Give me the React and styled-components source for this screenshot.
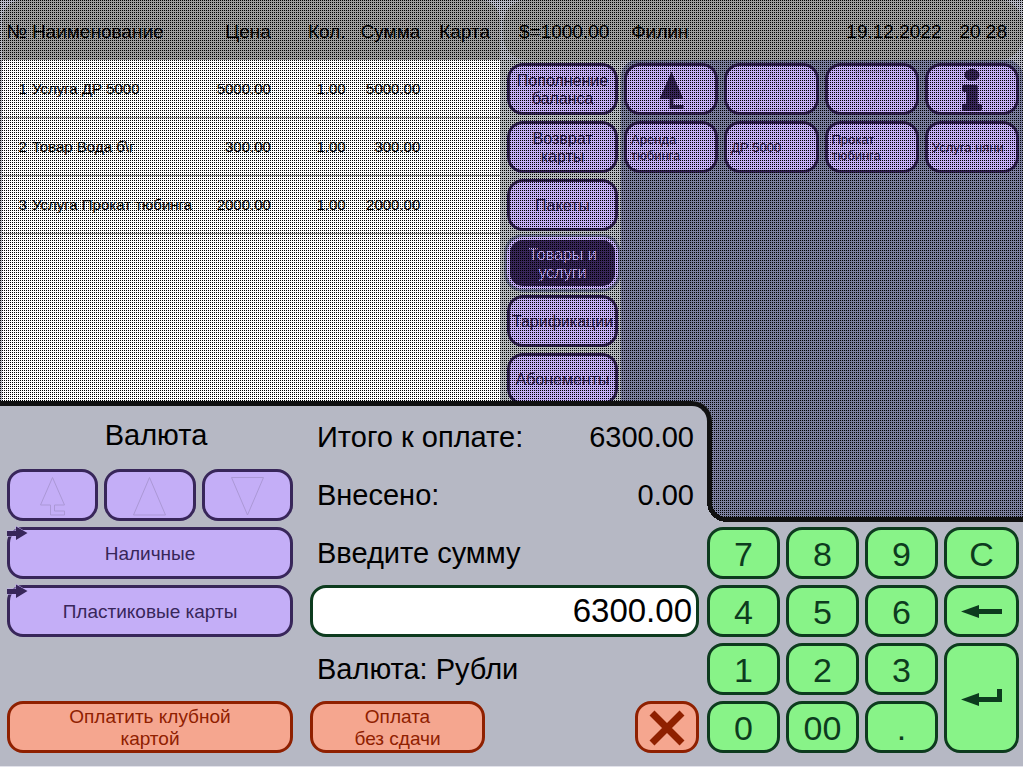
import React, { useState } from "react";
import styled, { createGlobalStyle, css } from "styled-components";
import { FaInfo } from "react-icons/fa";

const items = [
  { id: 1, name: "Услуга ДР 5000", price: "5000.00", qty: "1.00", sum: "5000.00" },
  { id: 2, name: "Товар Вода б\\г", price: "300.00", qty: "1.00", sum: "300.00" },
  { id: 3, name: "Услуга Прокат тюбинга", price: "2000.00", qty: "1.00", sum: "2000.00" },
];

const tabs = [
  "Пополнение баланса",
  "Возврат карты",
  "Пакеты",
  "Товары и услуги",
  "Тарификации",
  "Абонементы",
];

const goods = ["Аренда тюбинга", "ДР 5000", "Прокат тюбинга", "Услуга няни"];

const keys = ["7", "8", "9", "C", "4", "5", "6", "back", "1", "2", "3", "enter", "0", "00", "."];

function TurnIcon({ outline }) {
  return (
    <Shape width="27" height="40" viewBox="-1 -1 27 40" $outline={outline}>
      <path d="M12.5 0.5 L24.5 28 H14.5 V34 H24.5 V38 H10.5 V28 H0.5 Z" />
    </Shape>
  );
}

function TriangleIcon({ down }) {
  return (
    <Shape width="35" height="40" viewBox="-1 -1 35 40" $outline>
      <path d={down ? "M0.5 0.5 H32.5 L16.5 38 Z" : "M16.5 0.5 L32.5 38 H0.5 Z"} />
    </Shape>
  );
}

function BackIcon() {
  return (
    <Shape width="41" height="14" viewBox="0 0 41 14">
      <path d="M0 6.5 L18 0 V4 H41 V9 H18 V13 Z" />
    </Shape>
  );
}

function EnterIcon() {
  return (
    <Shape width="41" height="28" viewBox="0 4 41 28">
      <path d="M0 18.5 L18 12 V16 H36 V8 H41 V21 H18 V25 Z" />
    </Shape>
  );
}

function Key({ value, onPress }) {
  if (value === "back") {
    return (
      <KeyButton aria-label="Стереть" onClick={() => onPress(value)}>
        <BackIcon />
      </KeyButton>
    );
  }
  if (value === "enter") {
    return (
      <KeyButton $tall aria-label="Ввод" onClick={() => onPress(value)}>
        <EnterIcon />
      </KeyButton>
    );
  }
  return <KeyButton onClick={() => onPress(value)}>{value}</KeyButton>;
}

function Sale() {
  return (
    <SaleTable>
      <colgroup>
        <col style={{ width: "6%" }} />
        <col style={{ width: "33%" }} />
        <col style={{ width: "15%" }} />
        <col style={{ width: "15%" }} />
        <col style={{ width: "15%" }} />
        <col style={{ width: "16%" }} />
      </colgroup>
      <thead>
        <tr>
          <th>№</th>
          <th>Наименование</th>
          <th>Цена</th>
          <th>Кол.</th>
          <th>Сумма</th>
          <th>Карта</th>
        </tr>
      </thead>
      <tbody>
        {items.map((item) => (
          <tr key={item.id}>
            <td>{item.id}</td>
            <td>{item.name}</td>
            <td>{item.price}</td>
            <td>{item.qty}</td>
            <td>{item.sum}</td>
            <td />
          </tr>
        ))}
      </tbody>
    </SaleTable>
  );
}

function App() {
  const [amount, setAmount] = useState("6300.00");

  const press = (value) => {
    if (value === "C") setAmount("");
    else if (value === "back") setAmount((prev) => prev.slice(0, -1));
    else if (value !== "enter") setAmount((prev) => prev + value);
  };

  return (
    <Screen>
      <GlobalStyle />
      <SalePane>
        <Sale />
      </SalePane>
      <ShopPane>
        <StatusBar>
          <span>$=1000.00</span>
          <span>Филин</span>
          <Clock>
            <span>19.12.2022</span>
            <span>20 28</span>
          </Clock>
        </StatusBar>
        <ShopBody>
          <Tabs>
            {tabs.map((tab) => (
              <TabButton key={tab} $active={tab === "Товары и услуги"}>
                {tab}
              </TabButton>
            ))}
          </Tabs>
          <Goods>
            <GoodsGrid>
              <PurpleButton aria-label="Назад">
                <TurnIcon />
              </PurpleButton>
              <PurpleButton aria-label="Вверх" disabled>
                <TriangleIcon />
              </PurpleButton>
              <PurpleButton aria-label="Вниз" disabled>
                <TriangleIcon down />
              </PurpleButton>
              <PurpleButton aria-label="Информация">
                <InfoIcon preserveAspectRatio="none" />
              </PurpleButton>
              {goods.map((name) => (
                <GoodsButton key={name}>{name}</GoodsButton>
              ))}
            </GoodsGrid>
          </Goods>
        </ShopBody>
      </ShopPane>

      <Backdrop />

      <Dialog role="dialog" aria-label="Оплата">
        <Payment>
          <Currency>
            <Title>Валюта</Title>
            <Arrows>
              <PurpleButton aria-label="Назад" disabled>
                <TurnIcon outline />
              </PurpleButton>
              <PurpleButton aria-label="Вверх" disabled>
                <TriangleIcon />
              </PurpleButton>
              <PurpleButton aria-label="Вниз" disabled>
                <TriangleIcon down />
              </PurpleButton>
            </Arrows>
            {["Наличные", "Пластиковые карты"].map((name) => (
              <PurpleButton key={name}>
                <Marker width="21" height="15" viewBox="0 0 21 15">
                  <path d="M0 5 H9 V0.5 L20.5 7 L9 14 V10 H0 Z" />
                </Marker>
                {name}
              </PurpleButton>
            ))}
            <ClubButton>
              Оплатить клубной
              <br />
              картой
            </ClubButton>
          </Currency>

          <Totals>
            <Line>
              <span>Итого к оплате:</span>
              <span>6300.00</span>
            </Line>
            <Line>
              <span>Внесено:</span>
              <span>0.00</span>
            </Line>
            <Line>
              <label htmlFor="amount">Введите сумму</label>
            </Line>
            <AmountInput
              id="amount"
              type="text"
              value={amount}
              onChange={(e) => setAmount(e.target.value)}
            />
            <Line>Валюта: Рубли</Line>
            <Actions>
              <ExactButton>
                Оплата
                <br />
                без сдачи
              </ExactButton>
              <CloseButton aria-label="Закрыть">
                <svg width="36" height="36" viewBox="0 0 36 36">
                  <path d="M3 3 L33 33 M33 3 L3 33" stroke="currentColor" strokeWidth="7" />
                </svg>
              </CloseButton>
            </Actions>
          </Totals>
        </Payment>

        <KeypadSide>
          <Notch />
          <Keypad>
            {keys.map((value) => (
              <Key key={value} value={value} onPress={press} />
            ))}
          </Keypad>
        </KeypadSide>
      </Dialog>
    </Screen>
  );
}

export default App;

const GlobalStyle = createGlobalStyle`
  * {
    box-sizing: border-box;
  }

  body {
    margin: 0;
    font-family: "Liberation Sans", Arial, sans-serif;
    color: #000;
    background-color: #b6b8c4;
  }
`;

const Screen = styled.main`
  display: grid;
  grid-template-columns: 500fr 523fr;
  position: relative;
  min-height: 100vh;
  overflow: hidden;
`;

const SalePane = styled.section`
  margin-left: 2px;
  background: linear-gradient(#b9bacb 60px, #fff 60px);
`;

const SaleTable = styled.table`
  width: 100%;
  table-layout: fixed;
  border-collapse: separate;
  border-spacing: 0;
  white-space: nowrap;

  th {
    height: 60px;
    padding: 4px 0 0;
    font-size: 19px;
    font-weight: 400;
    text-align: right;
    background-color: #a0a0a0;
  }

  th:first-child {
    border-radius: 20px 0 0 0;
  }

  th:last-child {
    padding-right: 10px;
    border-radius: 0 20px 0 0;
  }

  td {
    height: 58px;
    padding: 0;
    font-size: 15px;
    text-align: right;
    border-bottom: 1px solid #a0a0a0;
  }

  th:first-child,
  td:first-child {
    padding-right: 5px;
  }

  th:nth-child(2),
  td:nth-child(2) {
    text-align: left;
  }
`;

const ShopPane = styled.section`
  display: flex;
  flex-direction: column;
`;

const StatusBar = styled.header`
  display: flex;
  align-items: center;
  gap: 22px;
  height: 60px;
  margin-left: 3px;
  padding: 4px 16px 0;
  font-size: 19px;
  background-color: #a0a0a0;
  border-radius: 24px;
`;

const Clock = styled.div`
  display: flex;
  gap: 18px;
  margin-left: auto;
`;

const ShopBody = styled.div`
  display: flex;
  flex: 1;
`;

const boxButton = css`
  display: flex;
  justify-content: center;
  align-items: center;
  position: relative;
  min-width: 0;
  height: 52px;
  margin: 0;
  padding: 1px 0 0;
  font-family: inherit;
  font-size: 19px;
  line-height: 22px;
  border: 3px solid currentColor;
  border-radius: 16px;
  cursor: pointer;
`;

const PurpleButton = styled.button`
  ${boxButton}
  color: #38265a;
  background-color: #c4aef7;

  &:disabled {
    color: #38265a;
    cursor: default;
  }
`;

const TabButton = styled(PurpleButton)`
  font-size: 16px;
  line-height: 18px;

  ${({ $active }) =>
    $active &&
    css`
      color: #c4aef7;
      background-color: #38265a;
      box-shadow: 0 0 0 3px #7c80a0;
    `}
`;

const GoodsButton = styled(PurpleButton)`
  justify-content: flex-start;
  padding-left: 4px;
  font-size: 13px;
  line-height: 16px;
  text-align: left;
`;

const Tabs = styled.nav`
  display: flex;
  flex-direction: column;
  gap: 6px;
  width: 121px;
  padding: 3px 3px 0 7px;
  background-color: #b6babe;
`;

const Goods = styled.div`
  flex: 1;
  padding: 3px 4px 0 3px;
  background-color: #7c80a0;
  border-radius: 16px 16px 0 0;
`;

const GoodsGrid = styled.div`
  display: grid;
  grid-template-columns: repeat(4, 1fr);
  gap: 6px;
`;

const Shape = styled.svg`
  fill: ${({ $outline }) => ($outline ? "none" : "currentColor")};
  stroke: ${({ $outline }) => ($outline ? "#ab98d6" : "none")};
  stroke-width: 1px;
`;

const InfoIcon = styled(FaInfo)`
  width: 20px;
  height: 42px;
`;

/* Checkered mesh that dims everything behind the payment dialog */
const Backdrop = styled.div`
  position: absolute;
  inset: 0;
  background: conic-gradient(#000 25%, transparent 0) 1px 0 / 2px 2px;
`;

const Dialog = styled.section`
  display: grid;
  grid-template-columns: 712fr 311fr;
  position: absolute;
  left: 0;
  right: 0;
  bottom: 0;
  border-bottom: 1px solid #e2e2ea;
`;

const Payment = styled.div`
  display: grid;
  grid-template-columns: 286fr 389fr;
  gap: 17px;
  position: relative;
  padding: 10px 13px 13px 7px;
  background-color: #b6b8c4;
  border-radius: 0 20px 0 0;

  &::before {
    content: "";
    position: absolute;
    top: 0;
    left: 0;
    right: 0;
    height: 101px;
    border: solid #111;
    border-width: 5px 5px 0 0;
    border-radius: 0 20px 0 0;
    pointer-events: none;
  }
`;

const Currency = styled.div`
  display: flex;
  flex-direction: column;
  gap: 6px;
`;

const Title = styled.h2`
  height: 52px;
  margin: 0;
  padding-left: 12px;
  font-size: 29px;
  font-weight: 400;
  line-height: 48px;
  text-align: center;
`;

const Arrows = styled.div`
  display: grid;
  grid-template-columns: repeat(3, 1fr);
  gap: 6px;
`;

const Marker = styled.svg`
  position: absolute;
  top: -4px;
  left: -3px;
  fill: #38265a;
  stroke: #c4aef7;
  stroke-width: 1px;
  paint-order: stroke;
`;

const RedButton = styled.button`
  ${boxButton}
  color: #8f2000;
  background-color: #f5a68f;
`;

const ClubButton = styled(RedButton)`
  margin-top: auto;
`;

const ExactButton = styled(RedButton)`
  width: 45%;
`;

const CloseButton = styled(RedButton)`
  width: 64px;
`;

const Totals = styled.div`
  display: flex;
  flex-direction: column;
  gap: 6px;
`;

const Line = styled.div`
  display: flex;
  justify-content: space-between;
  align-items: center;
  height: 52px;
  padding: 0 5px 0 7px;
  font-size: 29px;
  white-space: nowrap;
`;

const AmountInput = styled.input`
  width: 100%;
  height: 52px;
  padding: 0 4px;
  font-family: inherit;
  font-size: 33px;
  text-align: right;
  color: #000;
  background-color: #fff;
  border: 3px solid #0d3b1e;
  border-radius: 16px;
  outline: none;
`;

const Actions = styled.div`
  display: flex;
  justify-content: space-between;
`;

const KeypadSide = styled.div`
  display: flex;
  flex-direction: column;
`;

const Notch = styled.div`
  flex: 1;
  position: relative;
  border-bottom: 5px solid #111;

  /* inner corner where the payment side meets the keypad */
  &::before {
    content: "";
    position: absolute;
    left: -5px;
    bottom: -5px;
    width: 20px;
    height: 20px;
    background: radial-gradient(
      circle at top right,
      transparent 15px,
      #111 15px,
      #111 20px,
      #b6b8c4 20px
    );
  }
`;

const Keypad = styled.div`
  display: grid;
  grid-template-columns: 73fr 73fr 73fr 75fr;
  gap: 6px;
  position: relative;
  padding: 5px 4px 13px 0;
  background-color: #b6b8c4;
  margin-left: -5px;
`;

const KeyButton = styled.button`
  ${boxButton}
  height: auto;
  min-height: 52px;
  grid-row: ${({ $tall }) => ($tall ? "span 2" : "auto")};
  font-size: 34px;
  line-height: 40px;
  color: #0d3b1e;
  background-color: #88f388;
`;
